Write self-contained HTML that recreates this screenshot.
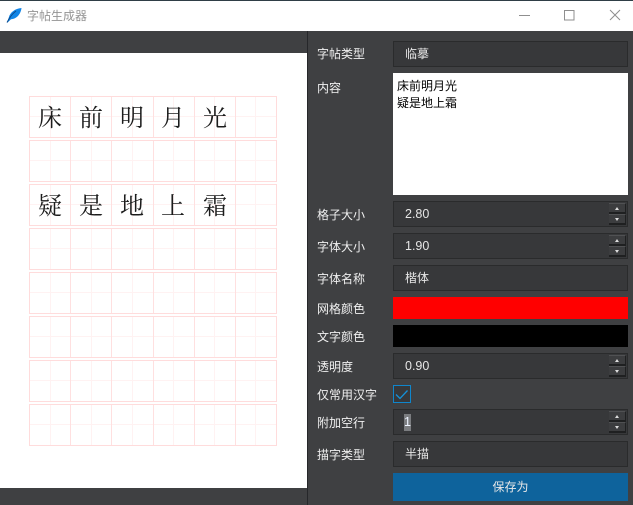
<!DOCTYPE html>
<html><head><meta charset="utf-8">
<style>
html,body{margin:0;padding:0}
body{width:633px;height:505px;overflow:hidden;position:relative;background:#3f4042;font-family:"Liberation Sans","Noto Sans CJK SC",sans-serif;font-size:12px}
.a{position:absolute;box-sizing:border-box}
.l{position:absolute;left:317px;color:#f0f0f0;font-size:12px;line-height:16px;white-space:nowrap}
.f{position:absolute;left:393px;width:235px;height:26px;box-sizing:border-box;background:#37383a;border:1px solid #2a2b2c;color:#e6e6e6;font-size:12.500px;line-height:25px;padding-left:11px}
.s{position:absolute;left:609px;width:17px;height:11px;background:#3c3d3f;border-bottom:2px solid #1f2021;border-right:1px solid #1f2021;border-top:1px solid #505153;box-sizing:border-box}
.s i{position:absolute;left:6px;top:3px;width:0;height:0;border-left:2.500px solid transparent;border-right:2.500px solid transparent}
.u i{border-bottom:3px solid #ddd}
.d i{border-top:3px solid #ddd}
</style></head><body>
<div class="a" style="left:0;top:0;width:633px;height:31px;background:#fff;border-top:1px solid #2f3e46"></div>
<svg class="a" style="left:6px;top:7px" width="16" height="16" viewBox="0 0 16 16"><path d="M1 15.500 L2.800 10.500 C4 5.500 9 1.500 15.500 1 C15 6.500 11 12 5 12.200 L1.600 15.500 Z" fill="#1185e6"/><path d="M1 15.500 L3.200 11.600 C4.200 10 6 7 10 4" stroke="#0b4a8c" stroke-width="1" fill="none"/></svg>
<div class="a" style="left:27px;top:7.500px;color:#949494;font-size:12px;line-height:17px;white-space:nowrap">字帖生成器</div>
<svg class="a" style="left:515px;top:5px" width="118" height="22" fill="none" stroke="#8f8f8f" stroke-width="1"><path d="M4 10.500H15"/><rect x="49.500" y="5.500" width="9.500" height="9.500"/><path d="M95 5l10 10M105 5l-10 10"/></svg>

<div class="a" style="left:0;top:53px;width:307px;height:435px;background:#fff"></div>
<svg class="a" style="left:0;top:53px" width="307" height="435" viewBox="0 53 307 435">
<g fill="none" stroke="#ffdcdc" stroke-width="1">
<path d="M50.500 96V138M91.500 96V138M132.500 96V138M173.500 96V138M214.500 96V138M255.500 96V138M50.500 140V182M91.500 140V182M132.500 140V182M173.500 140V182M214.500 140V182M255.500 140V182M50.500 184V226M91.500 184V226M132.500 184V226M173.500 184V226M214.500 184V226M255.500 184V226M50.500 228V270M91.500 228V270M132.500 228V270M173.500 228V270M214.500 228V270M255.500 228V270M50.500 272V314M91.500 272V314M132.500 272V314M173.500 272V314M214.500 272V314M255.500 272V314M50.500 316V358M91.500 316V358M132.500 316V358M173.500 316V358M214.500 316V358M255.500 316V358M50.500 360V402M91.500 360V402M132.500 360V402M173.500 360V402M214.500 360V402M255.500 360V402M50.500 404V446M91.500 404V446M132.500 404V446M173.500 404V446M214.500 404V446M255.500 404V446" stroke="#fff2f2"/>
<path d="M30 116.500H276M30 160.500H276M30 204.500H276M30 248.500H276M30 292.500H276M30 336.500H276M30 380.500H276M30 424.500H276" stroke="#fff2f2"/>
<path d="M70.500 96V138M111.500 96V138M153.500 96V138M194.500 96V138M235.500 96V138M70.500 140V182M111.500 140V182M153.500 140V182M194.500 140V182M235.500 140V182M70.500 184V226M111.500 184V226M153.500 184V226M194.500 184V226M235.500 184V226M70.500 228V270M111.500 228V270M153.500 228V270M194.500 228V270M235.500 228V270M70.500 272V314M111.500 272V314M153.500 272V314M194.500 272V314M235.500 272V314M70.500 316V358M111.500 316V358M153.500 316V358M194.500 316V358M235.500 316V358M70.500 360V402M111.500 360V402M153.500 360V402M194.500 360V402M235.500 360V402M70.500 404V446M111.500 404V446M153.500 404V446M194.500 404V446M235.500 404V446" stroke="#ffe0e0"/>
<rect x="29.500" y="96.500" width="247" height="41"/><rect x="29.500" y="140.500" width="247" height="41"/><rect x="29.500" y="184.500" width="247" height="41"/><rect x="29.500" y="228.500" width="247" height="41"/><rect x="29.500" y="272.500" width="247" height="41"/><rect x="29.500" y="316.500" width="247" height="41"/><rect x="29.500" y="360.500" width="247" height="41"/><rect x="29.500" y="404.500" width="247" height="41"/>
</g>
<g font-family="'Liberation Serif','Noto Serif CJK SC',serif" font-size="24" fill="#1c1c1c" text-anchor="middle">
<text x="50" y="126">床</text><text x="91" y="126">前</text><text x="132" y="126">明</text><text x="173" y="126">月</text><text x="215" y="126">光</text>
<text x="50" y="214">疑</text><text x="91" y="214">是</text><text x="132" y="214">地</text><text x="173" y="214">上</text><text x="215" y="214">霜</text>
</g>
</svg>

<div class="a" style="left:307px;top:31px;width:1px;height:474px;background:#26272a"></div>

<div class="l" style="top:46px">字帖类型</div>
<div class="l" style="top:80px">内容</div>
<div class="l" style="top:207px">格子大小</div>
<div class="l" style="top:239px">字体大小</div>
<div class="l" style="top:271px">字体名称</div>
<div class="l" style="top:301px">网格颜色</div>
<div class="l" style="top:329px">文字颜色</div>
<div class="l" style="top:359px">透明度</div>
<div class="l" style="top:387px">仅常用汉字</div>
<div class="l" style="top:415px">附加空行</div>
<div class="l" style="top:447px">描字类型</div>

<div class="f" style="top:41px;font-size:12px">临摹</div>
<div class="a" style="left:393px;top:73px;width:235px;height:122px;background:#fff;color:#000;font-size:12px;line-height:17px;padding:4.500px 4px">床前明月光<br>疑是地上霜</div>
<div class="f" style="top:201px">2.80</div>
<div class="s u" style="top:203px"><i></i></div><div class="s d" style="top:214px"><i></i></div>
<div class="f" style="top:233px">1.90</div>
<div class="s u" style="top:235px"><i></i></div><div class="s d" style="top:246px"><i></i></div>
<div class="f" style="top:265px;font-size:12px">楷体</div>
<div class="a" style="left:393px;top:297px;width:235px;height:22px;background:#f00"></div>
<div class="a" style="left:393px;top:325px;width:235px;height:22px;background:#000"></div>
<div class="f" style="top:353px">0.90</div>
<div class="s u" style="top:355px"><i></i></div><div class="s d" style="top:366px"><i></i></div>
<div class="a" style="left:393px;top:385px;width:18px;height:18px;border:1.500px solid #0f86cc;background:#37383a"></div>
<svg class="a" style="left:393px;top:385px" width="18" height="18" fill="none" stroke="#1591d8" stroke-width="1.300"><path d="M3 9.500L7 13.500L14.500 5.500"/></svg>
<div class="f" style="top:409px"></div>
<div class="a" style="left:404px;top:414px;width:7px;height:17px;background:#7b7d80;color:#eef4ff;text-align:center;font-size:12.500px;line-height:17px">1</div>
<div class="s u" style="top:411px"><i></i></div><div class="s d" style="top:422px"><i></i></div>
<div class="f" style="top:441px;font-size:12px">半描</div>
<div class="a" style="left:393px;top:473px;width:235px;height:28px;background:#0e639c;color:#e8e8e8;text-align:center;line-height:29px;font-size:12px">保存为</div>
</body></html>
